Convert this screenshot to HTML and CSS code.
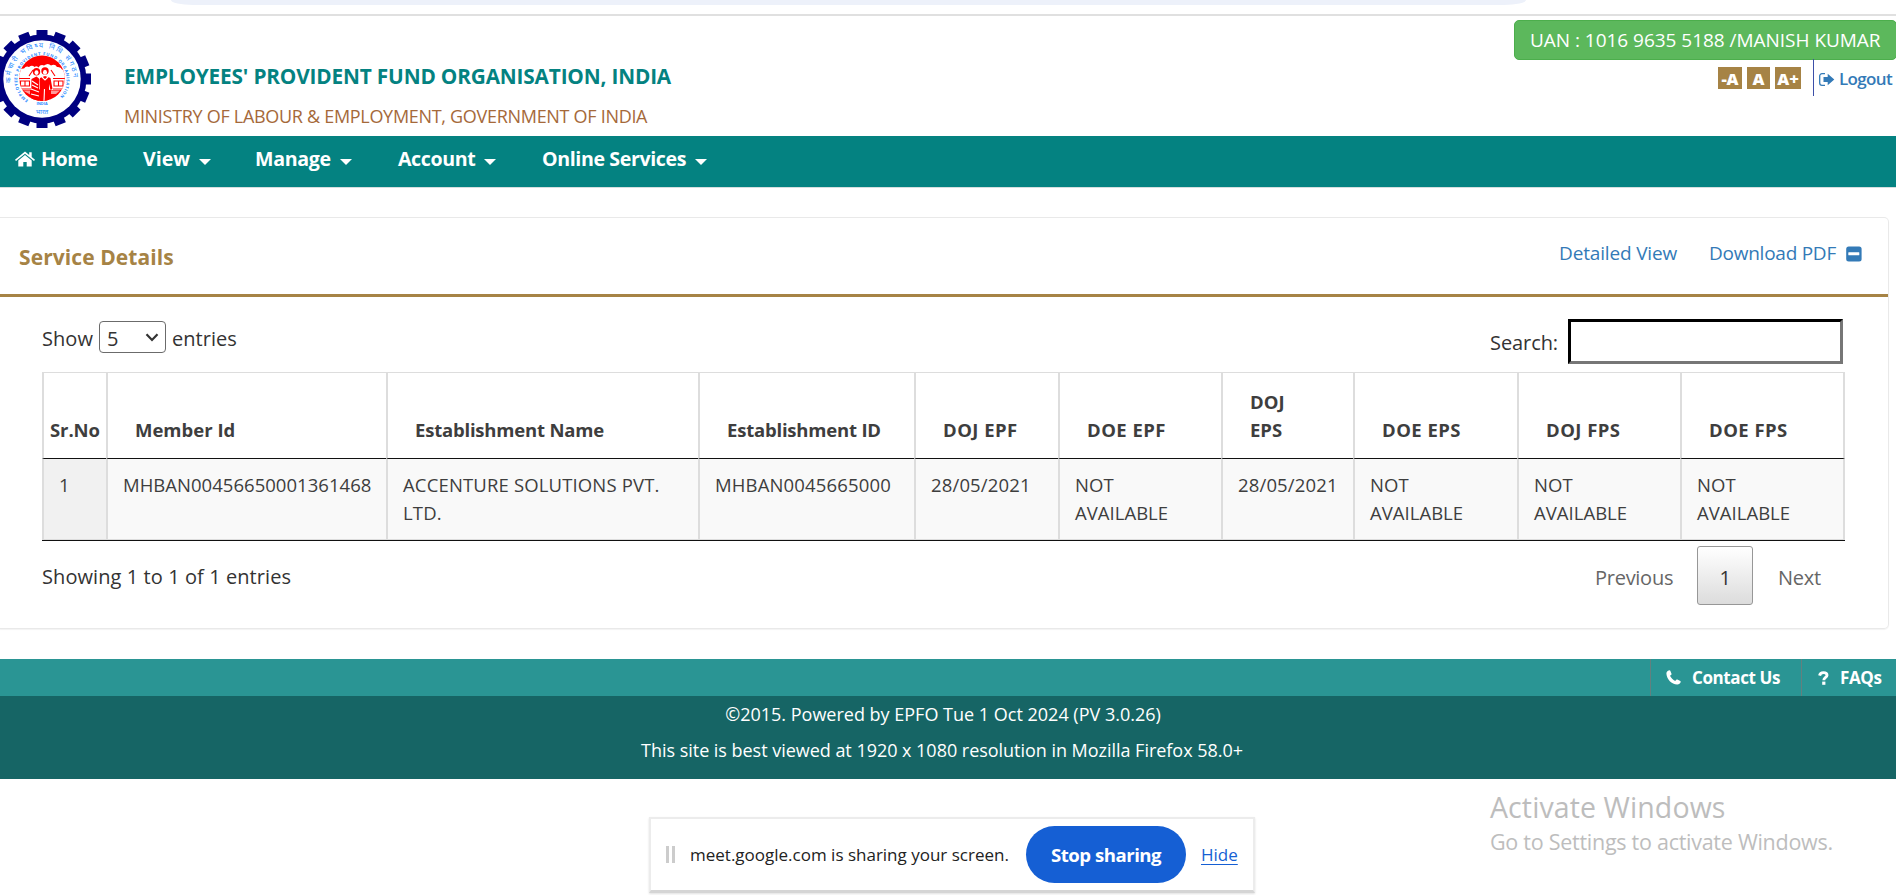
FILE: index.html
```html
<!DOCTYPE html>
<html lang="en">
<head>
<meta charset="utf-8">
<title>Service Details</title>
<link rel="stylesheet" href="styles.css">
</head>
<body>
<div class="browser-edge"><div class="omnibox"></div></div>

<header class="header">
  <svg class="logo" viewBox="0 0 92 100" width="92" height="100">
    <g fill="#000080">
      <circle cx="42" cy="50" r="44.5"/>
      <g id="teeth">
        <rect x="36.5" y="1" width="11" height="98"/>
        <rect x="36.5" y="1" width="11" height="98" transform="rotate(22.5 42 50)"/>
        <rect x="36.5" y="1" width="11" height="98" transform="rotate(45 42 50)"/>
        <rect x="36.5" y="1" width="11" height="98" transform="rotate(67.5 42 50)"/>
        <rect x="36.5" y="1" width="11" height="98" transform="rotate(90 42 50)"/>
        <rect x="36.5" y="1" width="11" height="98" transform="rotate(112.5 42 50)"/>
        <rect x="36.5" y="1" width="11" height="98" transform="rotate(135 42 50)"/>
        <rect x="36.5" y="1" width="11" height="98" transform="rotate(157.5 42 50)"/>
      </g>
    </g>
    <circle cx="42" cy="50" r="38.7" fill="#fff"/>
    <defs>
      <path id="arc-outer" d="M13.6 63.2A31.3 31.3 0 1 1 70.4 63.2"/>
      <path id="arc-inner" d="M28.1 71.2A24.6 24.6 0 1 1 55.9 71.2"/>
      <clipPath id="disc"><circle cx="42" cy="49.300" r="22.8"/></clipPath>
    </defs>
    <g fill="#1e88ff">
      <text class="logo-hindi"><textPath href="#arc-outer" startOffset="10" textLength="100">कर्मचारी भविष्य निधि संगठन</textPath></text>
      <text class="logo-ring"><textPath href="#arc-inner" textLength="119">EMPLOYEES PROVIDENT FUND ORGANISATION</textPath></text>
      <text class="logo-india" x="42" y="76" text-anchor="middle">INDIA</text>
      <text class="logo-bharat" x="42" y="85" text-anchor="middle">भारत</text>
    </g>
    <g clip-path="url(#disc)">
      <rect x="19" y="26" width="46" height="47" fill="#f00"/>
      <path fill="#fff" d="M18 42q3-3 6-2.500q2-3 5-1.500q3-2.500 5.500 0q2-1.500 4 .5q2-3.500 5.500-2q4-3 7 0q4-2 6 1.500q4-.5 5 2.500q4 0 5 3v4H18z"/>
      <path fill="#fff" d="M18 46h15v15H18zM51 46h15v15H51z"/>
      <path fill="none" stroke="#f00" stroke-width="1.100" d="M18 49.500h14M52 49.500h14M20.500 52h9v5h-9zM25 52v5M54 52h9v5h-9zM58.500 52v5M18 60h13M53 60h13M33 41l-4 6M51 41l4 6"/>
      <path fill="#fff" d="M31 60l-1-11l4-4h15l4 4l-1 12z"/>
      <circle cx="36.500" cy="42.800" r="3.700" fill="#f00"/><ellipse cx="36.500" cy="43.600" rx="2" ry="2.400" fill="#fff"/>
      <circle cx="45" cy="42" r="3.700" fill="#f00"/><ellipse cx="45" cy="43.200" rx="2" ry="2.500" fill="#fff"/>
      <path fill="#f00" d="M40 49l5-2l5.500 2l2 11l-2 1l-1.500-6v17h-9.500zM31.500 50l5-2.500l3 2.500l-.5 11v11h-8z"/>
      <path fill="none" stroke="#fff" stroke-width="1.100" d="M32 52l6 4M32 56l6 3M31 60l8 3M31 65l8 2M44.500 60l-.5 12M42 48l3 3l3-3"/>
      <path fill="#fff" d="M51 61.500h9l-4 3.500h-5zM23 61.500h7v4z" opacity=".6"/>
    </g>
  </svg>
  <div class="titles">
    <div class="org">EMPLOYEES' PROVIDENT FUND ORGANISATION, INDIA</div>
    <div class="ministry">MINISTRY OF LABOUR &amp; EMPLOYMENT, GOVERNMENT OF INDIA</div>
  </div>
  <div class="account">
    <div class="uan">UAN : 1016 9635 5188 /MANISH KUMAR</div>
    <div class="tools">
      <span class="size s1">-A</span><span class="size s2">A</span><span class="size s3">A+</span>
      <a class="logout">
        <svg width="16" height="13" viewBox="0 0 16 13"><path d="M6 .7H3A2.300 2.300 0 0 0 .7 3v7A2.300 2.300 0 0 0 3 12.300h3" fill="none" stroke="#337ab7" stroke-width="1.300"/><path d="M4.500 4h4.200V.8L15.300 6.500L8.700 12.200V9H4.500z" fill="#337ab7"/></svg>
        <span>Logout</span>
      </a>
    </div>
  </div>
</header>

<nav class="nav">
  <a class="home"><svg width="20" height="16" viewBox="0 0 20 16" fill="#fff"><path d="M10 .5L0 8.800l1 1.200L10 2.700L19 10l1-1.200L16.700 6V1.200h-2.500V4z"/><path d="M10 4L3.300 9.500V15.500H8.300V11h3.400v4.500h5V9.500z"/></svg><span>Home</span></a>
  <a class="view">View<i class="caret"></i></a>
  <a class="manage">Manage<i class="caret"></i></a>
  <a class="acct">Account<i class="caret"></i></a>
  <a class="online">Online Services<i class="caret"></i></a>
</nav>

<main class="panel">
  <div class="panel-head">
    <h1>Service Details</h1>
    <a class="detailed">Detailed View</a>
    <a class="download">Download PDF</a>
    <svg class="minus" width="16" height="16" viewBox="0 0 16 16"><rect x=".2" y=".4" width="15.400" height="15" rx="2.500" fill="#337ab7"/><rect x="2.300" y="6.300" width="11" height="3" rx=".5" fill="#fff"/></svg>
  </div>
  <div class="panel-body">
    <div class="controls">
      <div class="length">Show
        <span class="select">5<svg width="14" height="9" viewBox="0 0 14 9"><path d="M1.500 1.200L7 7L12.500 1.200" fill="none" stroke="#333" stroke-width="2.200"/></svg></span>
        entries</div>
      <label class="search">Search:<input type="text"></label>
    </div>
    <table class="grid">
      <colgroup><col class="c64"><col class="c280"><col class="c312"><col class="c216"><col class="c144"><col class="c163"><col class="c132"><col class="c164"><col class="c163"><col class="c165"></colgroup>
      <thead><tr><th class="sr">Sr.No</th><th>Member Id</th><th class="tight">Establishment Name</th><th class="tight">Establishment ID</th><th class="wide">DOJ EPF</th><th class="wide">DOE EPF</th><th>DOJ<br>EPS</th><th class="wide">DOE EPS</th><th class="wide">DOJ FPS</th><th class="wide">DOE FPS</th></tr></thead>
      <tbody><tr><td class="sorted">1</td><td>MHBAN00456650001361468</td><td class="name">ACCENTURE SOLUTIONS PVT. LTD.</td><td class="loose">MHBAN0045665000</td><td class="loose">28/05/2021</td><td>NOT<br>AVAILABLE</td><td class="loose">28/05/2021</td><td>NOT<br>AVAILABLE</td><td>NOT<br>AVAILABLE</td><td>NOT<br>AVAILABLE</td></tr></tbody>
    </table>
    <div class="table-foot">
      <div class="info">Showing 1 to 1 of 1 entries</div>
      <div class="pager"><span class="prev">Previous</span><span class="page">1</span><span class="next">Next</span></div>
    </div>
  </div>
</main>

<footer>
  <div class="links">
    <a class="contact"><svg width="15" height="15" viewBox="0 0 15 15"><path fill="#fff" d="M3.300.2C1.500.5.3 2 .4 3.800C.8 9.500 5.500 14.300 11.200 14.600c1.700.1 3-.9 3.500-2.500c.1-.5 0-.8-.4-1L11.400 9.500c-.4-.2-.8-.1-1.100.2L9.200 11C7 10 5 8 4 5.800L5.300 4.700c.3-.3.4-.6.2-1L4.300.7C4.100.3 3.700.1 3.300.2z"/></svg><span>Contact Us</span></a>
    <a class="faq"><svg width="11" height="14" viewBox="0 0 11 14"><path d="M1.600 4.600C2 2.600 3.400 1.600 5.400 1.600C7.500 1.600 9 2.700 9 4.300C9 6.400 5.800 6.500 5.800 9.200" fill="none" stroke="#fff" stroke-width="2.900"/><rect x="4.200" y="10.600" width="3.200" height="3.200" fill="#fff"/></svg><span>FAQs</span></a>
  </div>
  <div class="legal">
    <p class="copy">©2015. Powered by EPFO Tue 1 Oct 2024 (PV 3.0.26)</p>
    <p class="best">This site is best viewed at 1920 x 1080 resolution in Mozilla Firefox 58.0+</p>
  </div>
</footer>

<div class="activate"><div class="act1">Activate Windows</div><div class="act2">Go to Settings to activate Windows.</div></div>

<div class="share">
  <span class="grip"></span>
  <span class="msg">meet.google.com is sharing your screen.</span>
  <span class="stop">Stop sharing</span>
  <span class="hide">Hide</span>
</div>
</body>
</html>
```
FILE: styles.css
```css
* { box-sizing: border-box; }
body {
  margin: 0;
  height: 895px;
  overflow: hidden;
  position: relative;
  background: #fff;
  color: #333;
  font: 20px/28px "Open Sans", "Noto Sans", sans-serif;
}
svg { display: block; flex: none; }
h1, p { margin: 0; }

.browser-edge { height: 16px; padding: 0 370px 0 171px; border-bottom: 2px solid #e0e0e0; }
.omnibox { height: 5px; background: #edf1fa; border-radius: 0 0 22px 22px / 0 0 5px 5px; }

.header { display: flex; height: 120px; }
.logo { margin-top: 13px; }
.logo-hindi { font: 7px "Noto Sans Devanagari", "Noto Sans", sans-serif; }
.logo-ring { font: bold 4.2px "Open Sans", sans-serif; }
.logo-india { font: bold 3.8px "Open Sans", sans-serif; }
.logo-bharat { font: 6.5px "Noto Sans Devanagari", "Noto Sans", sans-serif; }
.titles { padding: 47px 0 0 32px; white-space: nowrap; }
.org { font-weight: 700; font-size: 20.8px; line-height: 26px; letter-spacing: -.17px; color: #048281; }
.ministry { margin-top: 15px; font-size: 18px; line-height: 24px; letter-spacing: -.3px; color: #a5693a; }
.account { margin-left: auto; width: 383px; margin-right: -1px; padding-top: 4px; }
.uan {
  height: 40px; padding-left: 15px; white-space: nowrap;
  background: #5cb85c; border: 1px solid #4cae4c; border-radius: 5px;
  color: #fff; font-size: 19px; line-height: 38px; letter-spacing: -.03px;
}
.tools { display: flex; padding-left: 204px; height: 37px; margin-top: -1px; }
.size {
  margin-top: 8px; height: 22px; margin-right: 5px; text-align: center;
  background: #a68345; color: #fff; font-weight: 800; font-size: 16.5px; line-height: 24px;
}
.s1 { width: 24px; } .s2 { width: 23px; } .s3 { width: 26px; margin-right: 12px; }
.logout { display: flex; border-left: 1px solid #3c4fa8; padding-left: 5px; color: #337ab7; font-size: 17px; letter-spacing: -.66px; font-weight: 600; line-height: 39px; }
.logout svg { margin: 14px 4px 0 0; }

.nav { display: flex; height: 52px; background: #048281; border-bottom: 1px solid #d5dede; color: #fff; font-weight: 700; line-height: 45px; white-space: nowrap; font-size: 19.6px; }
.nav a { display: flex; }
.home { width: 143px; padding-left: 15px; letter-spacing: -.4px; }
.home svg { margin: 15px 6px 0 0; }
.view { width: 112px; letter-spacing: 0; }
.manage { width: 143px; letter-spacing: -.3px; }
.acct { width: 144px; letter-spacing: -.4px; }
.online { letter-spacing: -.38px; }
.caret { margin: 23px 0 0 9px; width: 12px; height: 6px; border: 6px solid transparent; border-top-color: #fff; border-bottom: 0; }

.panel { width: 1889px; height: 412px; margin-top: 29px; border: 1px solid #e9e9e9; border-left: 0; border-radius: 0 5px 5px 0; box-shadow: 0 1px 1px rgba(0,0,0,.05); }
.panel-head { display: flex; height: 79px; border-bottom: 3px solid #a68345; padding-left: 19px; color: #337ab7; font-size: 19px; white-space: nowrap; }
.panel-head h1 { width: 1540px; font-size: 21px; line-height: 28px; font-weight: 700; color: #a68345; margin-top: 25px; letter-spacing: .08px; }
.detailed { width: 150px; margin-top: 21px; letter-spacing: -.16px; }
.download { width: 137px; margin-top: 21px; letter-spacing: -.25px; }
.minus { margin-top: 28px; }
.panel-body { padding: 22px 43px 0 42px; }
.controls { display: flex; justify-content: space-between; height: 53px; font-weight: 500; }
.length { display: flex; padding-top: 3px; line-height: 34px; gap: 6px; letter-spacing: .05px; }
.select { display: flex; justify-content: space-between; width: 67px; height: 32px; margin-top: -1px; padding: 0 6px 0 7px; border: 1px solid #6b6b6b; border-radius: 4px; line-height: 34px; }
.select svg { margin-top: 11px; }
.search { display: flex; gap: 10px; line-height: 48px; padding-right: 2px; letter-spacing: -.1px; }
.search input { width: 275px; height: 45px; border: 3px inset #767676; border-color: #212121 #767676 #767676 #212121; background: #fff; padding: 0; }

.grid { width: 1803px; table-layout: fixed; border-collapse: separate; border-spacing: 0; border-top: 1px solid #ddd; border-bottom: 1px solid #111; font-size: 18.5px; color: #3e3e3e; }
.c64 { width: 64px; } .c280 { width: 280px; } .c312 { width: 312px; } .c216 { width: 216px; } .c144 { width: 144px; }
.c163 { width: 163px; } .c132 { width: 132px; } .c164 { width: 164px; } .c165 { width: 165px; }
.grid th, .grid td { border-left: 2px solid #ddd; white-space: nowrap; text-align: left; }
.grid th:last-child, .grid td:last-child { border-right: 2px solid #ddd; }
.grid th { height: 86px; padding: 0 0 14px 27px; vertical-align: bottom; font-weight: 700; border-bottom: 1px solid #111; }
.grid .sr { padding-left: 6px; letter-spacing: -.1px; }
.grid .tight { letter-spacing: -.2px; }
.grid .wide { letter-spacing: .45px; }
.grid td { height: 81px; padding: 12px 0 0 15px; vertical-align: top; background: #f9f9f9; border-bottom: 1px solid #ddd; letter-spacing: .03px; }
.grid .loose { letter-spacing: .15px; }
.grid .sorted { background: #f1f1f1; }
.grid .name { white-space: normal; padding-right: 20px; letter-spacing: .15px; }

.table-foot { display: flex; justify-content: space-between; padding-top: 5px; }
.info { padding-top: 17px; letter-spacing: .08px; }
.pager { display: flex; height: 59px; line-height: 64px; color: #666; letter-spacing: -.27px; }
.page { width: 56px; margin: 0 25px; text-align: center; border: 1px solid #979797; border-radius: 3px; background: linear-gradient(#fff, #dcdcdc); color: #333; line-height: 62px; }
.prev { width: 77px; }
.next { width: 67px; }

footer { margin-top: 30px; color: #fff; }
.links { display: flex; justify-content: flex-end; height: 37px; background: #2a9594; font-size: 17px; font-weight: 700; line-height: 37px; letter-spacing: -.4px; white-space: nowrap; }
.links a { display: flex; border-left: 1px solid #63807f; }
.contact { width: 151px; padding-left: 15px; }
.contact svg { margin: 11px 11px 0 0; }
.faq { width: 95px; padding-left: 16px; }
.faq svg { margin: 12px 11px 0 0; }
.legal { height: 83px; background: #166565; padding-right: 10px; text-align: center; font-size: 18px; line-height: 36px; }
.copy { padding-top: 0; }
.best { letter-spacing: -.03px; padding-right: 2px; }

.activate { position: absolute; left: 1490px; top: 787px; color: #bdbdbd; white-space: nowrap; }
.act1 { font-size: 28.5px; line-height: 40px; letter-spacing: .1px; }
.act2 { font-size: 21.5px; line-height: 30px; letter-spacing: -.27px; }

.share { position: absolute; left: 649px; top: 817px; width: 606px; height: 76px; display: flex; align-items: center; background: #fff; border: 2px solid #ececec; border-bottom: 3px solid #d5d5d5; box-shadow: 0 1px 2px rgba(0,0,0,.12); font-size: 17px; color: #222; white-space: nowrap; }
.grip { width: 9px; height: 17px; margin: 0 15px; border: solid #ccc; border-width: 0 3px; }
.msg { width: 336px; }
.stop { width: 160px; height: 57px; border-radius: 28.5px; background: #155fd4; color: #fff; text-align: center; font-size: 18.6px; font-weight: 700; letter-spacing: -.48px; line-height: 58px; }
.hide { margin-left: 15px; color: #155fd4; text-decoration: underline; text-underline-offset: 3px; text-decoration-thickness: 1px; }
```
